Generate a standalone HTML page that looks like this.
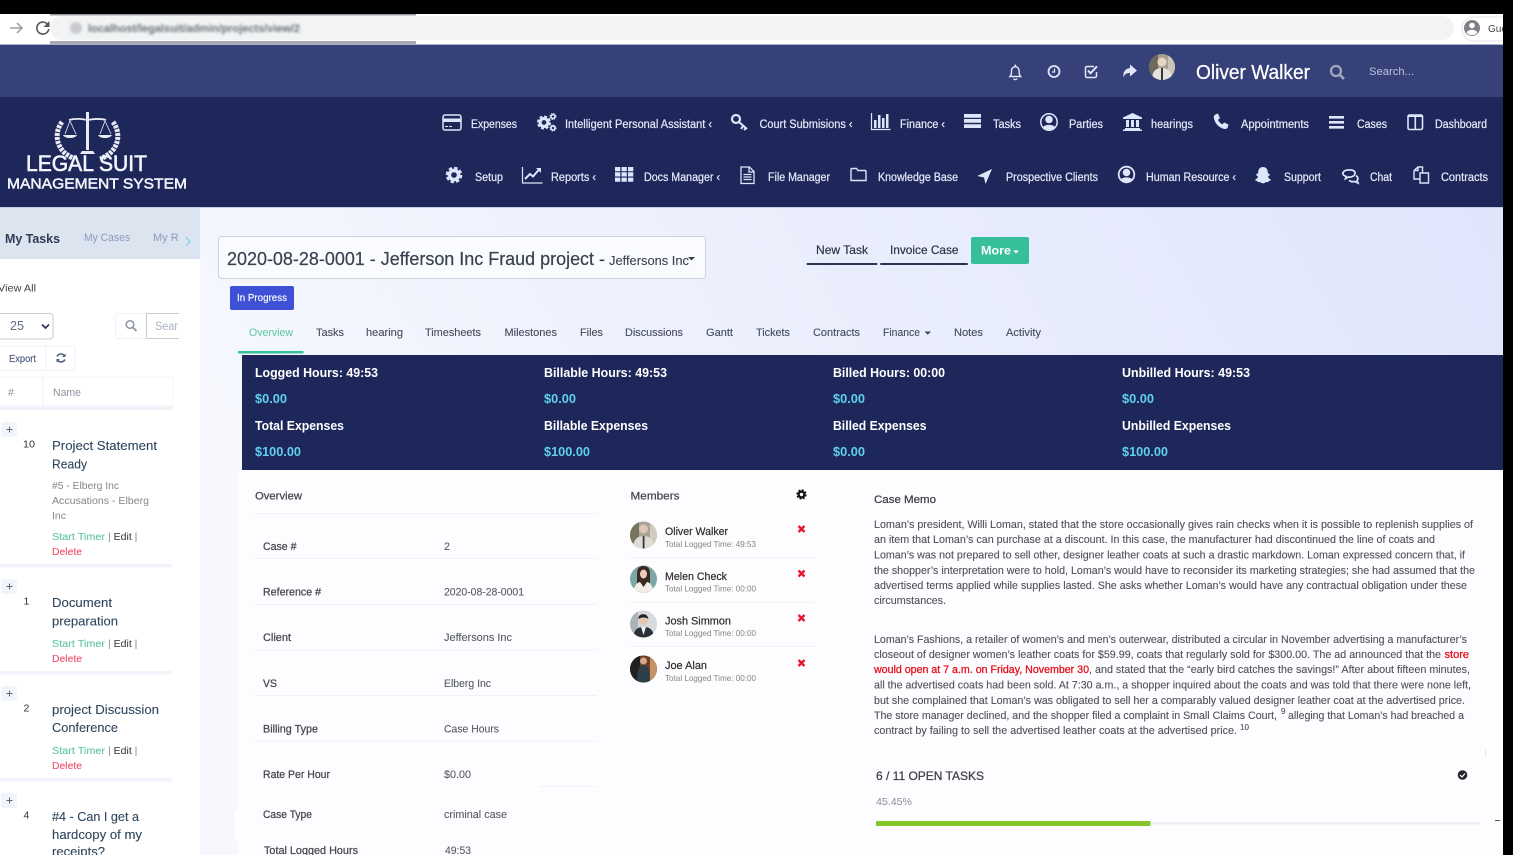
<!DOCTYPE html>
<html lang="en"><head><meta charset="utf-8"><title>Legal Suit Management System</title>
<style>
html,body{margin:0;padding:0;background:#000;width:1513px;height:855px;overflow:hidden}
svg{display:block;filter:blur(.3px)}
text{font-family:"Liberation Sans",sans-serif;white-space:pre}
.n{font-size:11.5px;fill:#e3e8f8;stroke:#e3e8f8;stroke-width:.22px}
.t{font-size:11px;fill:#454c5e;stroke:#454c5e;stroke-width:.12px}
.s{font-size:13px;font-weight:bold;fill:#fff}
.d{font-size:13px;font-weight:bold;fill:#5fd0ef}
.l{font-size:11px;fill:#44484f;stroke:#44484f;stroke-width:.25px}
.v{font-size:11px;fill:#555a64;stroke:#555a64;stroke-width:.1px}
.m{font-size:11px;fill:#4f5359;stroke:#4f5359;stroke-width:.12px}
.r{font-size:11px;fill:#e8111c;stroke:#e8111c;stroke-width:.3px}
.nm{font-size:11px;fill:#2e2e2e;stroke:#2e2e2e;stroke-width:.2px}
.sb{font-size:8.5px;fill:#858585}
.ti{font-size:13px;fill:#2f465c;stroke:#2f465c;stroke-width:.1px}
.g{font-size:10.5px;fill:#868686}
.st{font-size:10.5px;fill:#5fc4a1;stroke:#5fc4a1;stroke-width:.1px}
.ed{font-size:10.5px;fill:#333}
.de{font-size:10.5px;fill:#ee4f6c;stroke:#ee4f6c;stroke-width:.1px}
.ic{fill:#dde5fb}
.ol{fill:none;stroke:#dde5fb}
</style></head><body>
<svg xmlns="http://www.w3.org/2000/svg" width="1513" height="855" viewBox="0 0 1513 855">
<defs>
<linearGradient id="bg" x1="0" x2="1" y1="0.3" y2="0"><stop offset="0" stop-color="#f6f8fe"/><stop offset="1" stop-color="#dfe5fb"/></linearGradient>
<filter id="bl" x="-10%" y="-50%" width="120%" height="200%"><feGaussianBlur stdDeviation="1.2"/></filter>
<clipPath id="ca1"><circle cx="643.5" cy="535" r="13.5"/></clipPath>
<clipPath id="ca2"><circle cx="643.5" cy="579" r="13.5"/></clipPath>
<clipPath id="ca3"><circle cx="643.5" cy="624" r="13.5"/></clipPath>
<clipPath id="ca4"><circle cx="643.5" cy="669" r="13.5"/></clipPath>
<clipPath id="ca0"><circle cx="1162" cy="67" r="13"/></clipPath>
<clipPath id="side"><rect x="0" y="207" width="179" height="200"/></clipPath>
<g id="gear"><circle r="4.6" fill="none" stroke="currentColor" stroke-width="3.6"/><circle r="7" fill="none" stroke="currentColor" stroke-width="2.6" stroke-dasharray="3.3 2.2"/></g>
</defs>

<!-- browser chrome -->
<rect width="1513" height="855" fill="#000"/>
<rect x="0" y="14" width="1503" height="30" fill="#fff"/>
<rect x="50" y="16" width="1404" height="24" rx="12" fill="#f1f3f4"/>
<rect x="50" y="14" width="366" height="1.5" fill="#9a9aa5"/>
<rect x="50" y="41" width="366" height="4" fill="#a9acb8"/>
<path d="M10 28h12M17 23l5 5-5 5" fill="none" stroke="#9a9da3" stroke-width="1.5"/>
<path d="M48 25a6 6 0 1 0 .8 4" fill="none" stroke="#55585d" stroke-width="1.6"/><path d="M49.500 21v6h-6z" fill="#55585d"/>
<g filter="url(#bl)"><circle cx="76" cy="28" r="6" fill="#c8cacd"/><text x="88" y="32" font-size="11" font-weight="bold" fill="#6a6f78" textLength="212" lengthAdjust="spacingAndGlyphs">localhost/legalsuit/admin/projects/view/2</text></g>
<rect x="1462" y="17" width="50" height="24" rx="12" fill="#fff" stroke="#e4e5e8"/>
<circle cx="1472" cy="28" r="8" fill="#7f8388"/><circle cx="1472" cy="25.500" r="2.800" fill="#fff"/><path d="M1466.500 32.500c2-3.500 9-3.500 11 0a7 7 0 0 1-11 0z" fill="#fff"/>
<text x="1488" y="32" font-size="10" fill="#444">Gue</text>

<!-- header -->
<rect x="0" y="44" width="1503" height="53" fill="#364179"/>
<rect x="0" y="44" width="1503" height="1" fill="#a9b0c8"/>
<rect x="0" y="97" width="1503" height="110" fill="#1e2759"/>

<!-- top icons -->
<path d="M1010 76.500c1.500-1.500 1.500-3 1.500-6a3.800 3.800 0 0 1 7.600 0c0 3 .1 4.500 1.500 6z" fill="none" stroke="#e3e8f8" stroke-width="1.400"/><path d="M1013.500 78.500a2 2 0 0 0 3.600 0" fill="none" stroke="#e3e8f8" stroke-width="1.200"/><circle cx="1015.300" cy="65.500" r="1" fill="#e3e8f8"/>
<circle cx="1054" cy="71.500" r="5.500" fill="none" stroke="#e3e8f8" stroke-width="1.800"/><path d="M1054.500 68.500v3.500h-2.500" fill="none" stroke="#e3e8f8" stroke-width="1.200"/>
<path d="M1096.500 72v4a1.500 1.500 0 0 1-1.500 1.500h-8a1.500 1.500 0 0 1-1.500-1.500v-8a1.500 1.500 0 0 1 1.500-1.500h7" fill="none" stroke="#e3e8f8" stroke-width="1.500"/><path d="M1088 70.500l2.500 2.800 6.500-7" fill="none" stroke="#e3e8f8" stroke-width="2"/>
<path d="M1130 64.500l7 6-7 6v-3.500c-3.500 0-5.500 1-6.500 4.500-.8-5 1.500-9 6.500-9.500z" fill="#e3e8f8"/>
<g clip-path="url(#ca0)"><rect x="1149" y="54" width="26" height="26" fill="#a89f8e"/><rect x="1149" y="54" width="9" height="26" fill="#6d6a5e"/><rect x="1168" y="54" width="7" height="26" fill="#c9c4b6"/><circle cx="1162" cy="62" r="4.500" fill="#e5d5c5"/><path d="M1152 80c0-9 4-12 10-12s10 3 10 12z" fill="#e4e2dc"/><rect x="1161" y="68" width="2" height="12" fill="#33363d"/></g>
<text x="1196" y="79" font-size="20" fill="#fff" stroke="#fff" stroke-width=".25" textLength="114" lengthAdjust="spacingAndGlyphs">Oliver Walker</text>
<circle cx="1336" cy="71" r="5" fill="none" stroke="#a4a9bd" stroke-width="2.200"/><path d="M1339.500 74.500l4.500 4.500" stroke="#a4a9bd" stroke-width="2.600"/>
<text x="1369" y="75" font-size="11" fill="#bcc3dc" textLength="45" lengthAdjust="spacingAndGlyphs">Search...</text>

<!-- logo -->
<g fill="none" stroke="#e8ebf5">
<path d="M87.500 112v38" stroke-width="3"/><path d="M82 151h11l2 3h-15z" fill="#e8ebf5" stroke="none"/>
<path d="M69 120c7-2 13-1 18.500 0 5.500-1 12-2 18.500 0" stroke-width="1.800"/>
<path d="M70 121l-5 13M70 121l6 13M105 121l-5 13M105 121l6 13" stroke-width=".8"/>
<path d="M63 135h14c-2 4-12 4-14 0zM98 135h14c-2 4-12 4-14 0z" fill="#e8ebf5" stroke="none"/>
<path d="M62 122c-7 9-7 23 4 32 3 2 6 4 9 5" stroke-width="5" stroke-dasharray="3 1"/>
<path d="M113 122c7 9 7 23-4 32-3 2-6 4-9 5" stroke-width="5" stroke-dasharray="3 1"/>
</g>
<text x="26" y="171" font-size="22" fill="#f2f4fb" stroke="#f2f4fb" stroke-width=".6" textLength="121" lengthAdjust="spacingAndGlyphs">LEGAL SUIT</text>
<text x="7" y="188.500" font-size="15" fill="#f2f4fb" stroke="#f2f4fb" stroke-width=".5" textLength="180" lengthAdjust="spacingAndGlyphs">MANAGEMENT SYSTEM</text>

<!-- nav row 1 -->
<g class="n">
<text class="n" x="471" y="128" textLength="46" lengthAdjust="spacingAndGlyphs">Expenses</text>
<text class="n" x="565" y="128" textLength="147" lengthAdjust="spacingAndGlyphs">Intelligent Personal Assistant ‹</text>
<text class="n" x="759.500" y="128" textLength="93" lengthAdjust="spacingAndGlyphs">Court Submisions ‹</text>
<text class="n" x="900" y="128" textLength="45" lengthAdjust="spacingAndGlyphs">Finance ‹</text>
<text class="n" x="993" y="128" textLength="28" lengthAdjust="spacingAndGlyphs">Tasks</text>
<text class="n" x="1069" y="128" textLength="34" lengthAdjust="spacingAndGlyphs">Parties</text>
<text class="n" x="1151" y="128" textLength="42" lengthAdjust="spacingAndGlyphs">hearings</text>
<text class="n" x="1241" y="128" textLength="68" lengthAdjust="spacingAndGlyphs">Appointments</text>
<text class="n" x="1357" y="128" textLength="30" lengthAdjust="spacingAndGlyphs">Cases</text>
<text class="n" x="1435" y="128" textLength="52" lengthAdjust="spacingAndGlyphs">Dashboard</text>
<text class="n" x="475" y="181" textLength="28" lengthAdjust="spacingAndGlyphs">Setup</text>
<text class="n" x="551" y="181" textLength="45" lengthAdjust="spacingAndGlyphs">Reports ‹</text>
<text class="n" x="644" y="181" textLength="76" lengthAdjust="spacingAndGlyphs">Docs Manager ‹</text>
<text class="n" x="768" y="181" textLength="62" lengthAdjust="spacingAndGlyphs">File Manager</text>
<text class="n" x="878" y="181" textLength="80" lengthAdjust="spacingAndGlyphs">Knowledge Base</text>
<text class="n" x="1006" y="181" textLength="92" lengthAdjust="spacingAndGlyphs">Prospective Clients</text>
<text class="n" x="1146" y="181" textLength="90" lengthAdjust="spacingAndGlyphs">Human Resource ‹</text>
<text class="n" x="1284" y="181" textLength="37" lengthAdjust="spacingAndGlyphs">Support</text>
<text class="n" x="1370" y="181" textLength="22" lengthAdjust="spacingAndGlyphs">Chat</text>
<text class="n" x="1441" y="181" textLength="47" lengthAdjust="spacingAndGlyphs">Contracts</text>
</g>

<!-- nav icons row 1 -->
<rect class="ol" x="443" y="115" width="18" height="15" rx="2" stroke-width="1.500"/><rect class="ic" x="443" y="118.500" width="18" height="3.500"/><rect class="ic" x="445" y="126" width="3" height="1"/><rect class="ic" x="449" y="126" width="3" height="1"/>
<g style="color:#dde5fb"><use href="#gear" transform="translate(544 122.500) scale(.85)"/><use href="#gear" transform="translate(553 116.500) scale(.42)"/><use href="#gear" transform="translate(553 128) scale(.42)"/></g>
<circle class="ol" cx="736" cy="119" r="4" stroke-width="2.200"/><path class="ol" d="M739 122l8 7M743 126l-2 3M746 128l-2 2" stroke-width="2"/>
<path class="ol" d="M871.500 113v16.500h19" stroke-width="1.200"/><path class="ic" d="M874 120h2.500v8H874zM878 115h2.500v13H878zM882 118h2.500v10H882zM886 114h2.500v14H886z"/>
<path class="ic" d="M964 114h17v3.800h-17zM964 119h17v3.800h-17zM964 124.200h17v3.800h-17z"/>
<circle class="ol" cx="1049" cy="122" r="8.200" stroke-width="1.500"/><circle class="ic" cx="1049" cy="119.500" r="3.800"/><path class="ic" d="M1043 127.500c1-3.500 11-3.500 12 0-3 3-9 3-12 0z"/>
<path class="ic" d="M1132.500 113l9.500 4.500v1.500h-19v-1.500zM1125 128h15v1.500h2v1.500h-19v-1.500h2zM1126 120h3v7h-3zM1131 120h3v7h-3zM1136 120h3v7h-3z"/>
<path class="ic" d="M1215.500 114.200l2.500-.7 2 4.700-2 1.500c.8 2 2.500 3.800 4.500 4.700l1.600-2 4.400 2.200-.8 2.900c-.5 1.200-2 1.700-3.500 1.400-5.500-1.200-9.500-5.500-10.500-11.500-.2-1.300.7-2.500 1.800-2.700z"/>
<path class="ic" d="M1329 116h15v2.600h-15zM1329 121h15v2.600h-15zM1329 126h15v2.600h-15z"/>
<rect class="ol" x="1408" y="115" width="14.500" height="14.500" rx="1.500" stroke-width="1.600"/><path class="ic" d="M1414.500 115h1.600v14.500h-1.600zM1408 115h14.500v2h-14.500z"/>

<!-- nav icons row 2 -->
<g style="color:#dde5fb"><use href="#gear" transform="translate(454 175)"/></g>
<path class="ol" d="M522.500 167v16h20" stroke-width="1.200"/><path class="ol" d="M525 179l5-5 3 2.500 6-7" stroke-width="2"/><path class="ic" d="M536 168h5v5z"/>
<path class="ic" d="M615 167h5.300v4.200H615zM621.500 167h5.300v4.200h-5.300zM628 167h5.300v4.200H628zM615 172.300h5.300v4.200H615zM621.500 172.300h5.300v4.200h-5.300zM628 172.300h5.300v4.200H628zM615 177.600h5.300v4.200H615zM621.500 177.600h5.300v4.200h-5.300zM628 177.600h5.300v4.200H628z"/>
<path class="ol" d="M741 167h8.500l4.500 4.500V183.500h-13zM749 167v5h5M743.500 174.500h8M743.500 177h8M743.500 179.500h8" stroke-width="1.300"/>
<path class="ol" d="M851 180.500v-11a1 1 0 0 1 1-1h4.500l1.500 2h7a1 1 0 0 1 1 1v9z" stroke-width="1.400"/>
<path class="ic" d="M992 169l-6.500 15-1.500-6.500-6.800-1.500z"/>
<circle class="ol" cx="1126.500" cy="174.500" r="7.800" stroke-width="1.800"/><circle class="ic" cx="1126.500" cy="172.500" r="3.800"/><path class="ic" d="M1120.500 180c1.500-3.500 10.500-3.500 12 0-3 3-9 3-12 0z"/>
<path class="ic" d="M1263 167c3.500 0 4.800 2.700 4.800 5.500 0 1.500 2 1 2 2.200 0 1-1.800 1.300-1.800 2 .5 1.500 2.200 2.700 3 3 0 1-2 1-2.500 1.700-.7 1.300-1.500.3-3 1-1.200.7-2.300 1-2.500 1s-1.300-.3-2.500-1c-1.500-.7-2.300.3-3-1-.5-.7-2.500-.7-2.500-1.700.8-.3 2.500-1.500 3-3 0-.7-1.800-1-1.800-2 0-1.200 2-.7 2-2.200 0-2.800 1.300-5.500 4.800-5.500z"/>
<path class="ol" d="M1343 172.500c2-3.500 11-3.500 12 0 .7 3-3 5-6.500 4.500l-3 1.700.7-2.300c-2.300-.7-4-2-3.200-3.900z" stroke-width="1.700"/><path class="ol" d="M1356 175.500c2 1.500 2.500 3.500 1 5l1 2.500-3.500-1.500c-2 .5-4 0-5.500-1" stroke-width="1.700"/>
<path class="ol" d="M1414 170.500l4-3.500h4.500v5.500M1414 170.500v8.500h6M1414 170.500h4v-3.500M1420 173h8.500v10h-8.500z" stroke-width="1.400"/>

<!-- content background -->
<rect x="0" y="207" width="1503" height="1.500" fill="#c4cde8"/>
<rect x="200" y="208" width="1303" height="647" fill="url(#bg)"/>
<rect x="0" y="208" width="200" height="51" fill="#dce5ef"/>
<rect x="0" y="259" width="200" height="596" fill="#fff"/>

<!-- sidebar -->
<text x="5" y="243" font-size="13" font-weight="bold" fill="#2f3a57" textLength="55" lengthAdjust="spacingAndGlyphs">My Tasks</text>
<text x="84" y="241" font-size="11" fill="#8a9abd" textLength="46" lengthAdjust="spacingAndGlyphs">My Cases</text>
<g clip-path="url(#side)"><text x="153" y="241" font-size="11" fill="#8a9abd">My Reminders</text></g>
<path d="M186 237l4 4.500-4 4.500" fill="none" stroke="#8ed6ef" stroke-width="1.500"/>
<text x="-2" y="291.500" font-size="10.500" fill="#444" textLength="38" lengthAdjust="spacingAndGlyphs">View All</text>
<rect x="-6" y="313.500" width="59" height="25.500" rx="3" fill="#fff" stroke="#c6ccd6"/>
<text x="10" y="330" font-size="12.500" fill="#5d6b80" textLength="14" lengthAdjust="spacingAndGlyphs">25</text>
<path d="M42 324.500l3.500 3.500 3.500-3.500" fill="none" stroke="#2f3a57" stroke-width="1.800"/>
<rect x="115.500" y="313.500" width="31" height="25" rx="2" fill="#fff" stroke="#eef0f6"/>
<circle cx="130" cy="324.500" r="3.800" fill="none" stroke="#8a95a5" stroke-width="1.500"/><path d="M133 327.500l3.500 3.500" stroke="#8a95a5" stroke-width="1.800"/>
<path d="M146.500 313.500h32.500M146.500 338.500h32.500M146.500 313.500v25" fill="none" stroke="#c6ccd6"/>
<text x="155" y="330" font-size="11.500" fill="#aab2c0" textLength="23" lengthAdjust="spacingAndGlyphs">Sear</text>
<rect x="-4" y="346" width="50" height="24.500" fill="#fff" stroke="#f0f2f8"/>
<rect x="46" y="346" width="29" height="24.500" rx="1" fill="#fff" stroke="#f0f2f8"/>
<text x="9" y="362" font-size="10" fill="#4e5c80" stroke="#4e5c80" stroke-width=".15" textLength="27" lengthAdjust="spacingAndGlyphs">Export</text>
<path d="M57 356.500a4.500 4.500 0 0 1 8 0M65 359.500a4.500 4.500 0 0 1-8 0" fill="none" stroke="#4e5c80" stroke-width="1.500"/><path d="M65.500 353.500v3.500h-3.500zM56.500 362.500v-3.500h3.500z" fill="#4e5c80"/>
<rect x="-2" y="377" width="175" height="29" fill="#fff" stroke="#f2f4fa"/>
<path d="M43 377v29" stroke="#f0f2f8"/>
<rect x="0" y="406" width="173" height="4" fill="#f1f3fb"/>
<text x="8" y="396" font-size="11" fill="#8d939f" textLength="6" lengthAdjust="spacingAndGlyphs">#</text>
<text x="53" y="396" font-size="11" fill="#8d939f" textLength="28" lengthAdjust="spacingAndGlyphs">Name</text>

<!-- rows -->
<g fill="#f2f4fb">
<rect x="1" y="422" width="16" height="15" rx="3"/><rect x="1" y="579" width="16" height="15" rx="3"/><rect x="1" y="686" width="16" height="15" rx="3"/><rect x="1" y="793" width="16" height="15" rx="3"/>
<rect x="0" y="564" width="172" height="3.500"/><rect x="0" y="671" width="172" height="3.500"/><rect x="0" y="778" width="172" height="3.500"/>
</g>
<g fill="#5a6680"><path d="M6.500 429h6v1h-6zM9 426.500h1v6H9zM6.500 586h6v1h-6zM9 583.500h1v6H9zM6.500 693h6v1h-6zM9 690.500h1v6H9zM6.500 800h6v1h-6zM9 797.500h1v6H9z"/></g>
<g font-size="10.500" fill="#333"><text x="23" y="447.500" textLength="12" lengthAdjust="spacingAndGlyphs">10</text><text x="23.500" y="604.500">1</text><text x="23.500" y="711.500">2</text><text x="23.500" y="818.500">4</text></g>
<text class="ti" x="52" y="450" textLength="105" lengthAdjust="spacingAndGlyphs">Project Statement</text>
<text class="ti" x="52" y="468.500" textLength="35" lengthAdjust="spacingAndGlyphs">Ready</text>
<text class="g" x="52" y="489" textLength="67" lengthAdjust="spacingAndGlyphs">#5 - Elberg Inc</text>
<text class="g" x="52" y="504" textLength="97" lengthAdjust="spacingAndGlyphs">Accusations - Elberg</text>
<text class="g" x="52" y="519" textLength="14" lengthAdjust="spacingAndGlyphs">Inc</text>
<text class="ti" x="52" y="607" textLength="60" lengthAdjust="spacingAndGlyphs">Document</text>
<text class="ti" x="52" y="625.500" textLength="66" lengthAdjust="spacingAndGlyphs">preparation</text>
<text class="ti" x="52" y="714" textLength="107" lengthAdjust="spacingAndGlyphs">project Discussion</text>
<text class="ti" x="52" y="732" textLength="66" lengthAdjust="spacingAndGlyphs">Conference</text>
<text class="ti" x="52" y="821" textLength="87" lengthAdjust="spacingAndGlyphs">#4 - Can I get a</text>
<text class="ti" x="52" y="839" textLength="90" lengthAdjust="spacingAndGlyphs">hardcopy of my</text>
<text class="ti" x="52" y="856" textLength="53" lengthAdjust="spacingAndGlyphs">receipts?</text>

<text class="st" x="52" y="540" textLength="53" lengthAdjust="spacingAndGlyphs">Start Timer</text><text class="ed" x="108" y="540"><tspan fill="#888">|</tspan> Edit <tspan fill="#888">|</tspan></text><text class="de" x="52" y="555" textLength="30" lengthAdjust="spacingAndGlyphs">Delete</text>
<text class="st" x="52" y="647" textLength="53" lengthAdjust="spacingAndGlyphs">Start Timer</text><text class="ed" x="108" y="647"><tspan fill="#888">|</tspan> Edit <tspan fill="#888">|</tspan></text><text class="de" x="52" y="662" textLength="30" lengthAdjust="spacingAndGlyphs">Delete</text>
<text class="st" x="52" y="754" textLength="53" lengthAdjust="spacingAndGlyphs">Start Timer</text><text class="ed" x="108" y="754"><tspan fill="#888">|</tspan> Edit <tspan fill="#888">|</tspan></text><text class="de" x="52" y="769" textLength="30" lengthAdjust="spacingAndGlyphs">Delete</text>

<!-- title block -->
<rect x="218.500" y="236.500" width="487" height="42" rx="3" fill="#fafbff" stroke="#cfd3de"/>
<text x="227" y="265" font-size="18.500" fill="#38424f" stroke="#38424f" stroke-width=".2" textLength="378" lengthAdjust="spacingAndGlyphs">2020-08-28-0001 - Jefferson Inc Fraud project -</text>
<text x="609" y="265" font-size="12.500" fill="#38424f" stroke="#38424f" stroke-width=".1" textLength="80" lengthAdjust="spacingAndGlyphs">Jeffersons Inc</text>
<path d="M688 257h7l-3.500 3.500z" fill="#38424f"/>
<text x="816" y="254" font-size="12" fill="#2c3446" stroke="#2c3446" stroke-width=".2" textLength="52" lengthAdjust="spacingAndGlyphs">New Task</text>
<text x="890" y="254" font-size="12" fill="#2c3446" stroke="#2c3446" stroke-width=".2" textLength="68.500" lengthAdjust="spacingAndGlyphs">Invoice Case</text>
<rect x="806.500" y="263" width="71" height="2" rx="1" fill="#2b3350"/>
<rect x="880" y="263" width="88" height="2" rx="1" fill="#2b3350"/>
<rect x="971" y="237" width="58" height="27" rx="2" fill="#37bf9b"/>
<text x="981" y="254.500" font-size="12" font-weight="bold" fill="#fff" textLength="30" lengthAdjust="spacingAndGlyphs">More</text>
<path d="M1013 250.500h6l-3 3z" fill="#fff"/>
<rect x="230" y="286" width="64" height="24" rx="2" fill="#3d50d6"/>
<text x="237" y="301" font-size="10.500" fill="#fff" stroke="#fff" stroke-width=".15" textLength="50" lengthAdjust="spacingAndGlyphs">In Progress</text>

<!-- tabs -->
<text class="t" style="fill:#6cc9aa;stroke:#6cc9aa" x="249" y="336" textLength="44" lengthAdjust="spacingAndGlyphs">Overview</text>
<text class="t" x="316" y="336" textLength="28" lengthAdjust="spacingAndGlyphs">Tasks</text>
<text class="t" x="366" y="336" textLength="37" lengthAdjust="spacingAndGlyphs">hearing</text>
<text class="t" x="425" y="336" textLength="56" lengthAdjust="spacingAndGlyphs">Timesheets</text>
<text class="t" x="504.500" y="336" textLength="52.500" lengthAdjust="spacingAndGlyphs">Milestones</text>
<text class="t" x="580" y="336" textLength="23" lengthAdjust="spacingAndGlyphs">Files</text>
<text class="t" x="625" y="336" textLength="58" lengthAdjust="spacingAndGlyphs">Discussions</text>
<text class="t" x="706" y="336" textLength="27" lengthAdjust="spacingAndGlyphs">Gantt</text>
<text class="t" x="756" y="336" textLength="34" lengthAdjust="spacingAndGlyphs">Tickets</text>
<text class="t" x="813" y="336" textLength="47" lengthAdjust="spacingAndGlyphs">Contracts</text>
<text class="t" x="883" y="336" textLength="37" lengthAdjust="spacingAndGlyphs">Finance</text>
<path d="M924.500 331.500h6.500l-3.200 3.200z" fill="#3e4555"/>
<text class="t" x="954" y="336" textLength="29" lengthAdjust="spacingAndGlyphs">Notes</text>
<text class="t" x="1006" y="336" textLength="35" lengthAdjust="spacingAndGlyphs">Activity</text>
<rect x="238" y="351" width="65.500" height="2.500" fill="#37bf9b"/>

<!-- stats -->
<rect x="242" y="355" width="1261" height="115" fill="#1e2759"/>
<text class="s" x="255" y="377" textLength="123" lengthAdjust="spacingAndGlyphs">Logged Hours: 49:53</text>
<text class="s" x="544" y="377" textLength="123" lengthAdjust="spacingAndGlyphs">Billable Hours: 49:53</text>
<text class="s" x="833" y="377" textLength="112" lengthAdjust="spacingAndGlyphs">Billed Hours: 00:00</text>
<text class="s" x="1122" y="377" textLength="128" lengthAdjust="spacingAndGlyphs">Unbilled Hours: 49:53</text>
<text class="d" x="255" y="403" textLength="32" lengthAdjust="spacingAndGlyphs">$0.00</text>
<text class="d" x="544" y="403" textLength="32" lengthAdjust="spacingAndGlyphs">$0.00</text>
<text class="d" x="833" y="403" textLength="32" lengthAdjust="spacingAndGlyphs">$0.00</text>
<text class="d" x="1122" y="403" textLength="32" lengthAdjust="spacingAndGlyphs">$0.00</text>
<text class="s" x="255" y="430" textLength="89" lengthAdjust="spacingAndGlyphs">Total Expenses</text>
<text class="s" x="544" y="430" textLength="104" lengthAdjust="spacingAndGlyphs">Billable Expenses</text>
<text class="s" x="833" y="430" textLength="93.500" lengthAdjust="spacingAndGlyphs">Billed Expenses</text>
<text class="s" x="1122" y="430" textLength="109" lengthAdjust="spacingAndGlyphs">Unbilled Expenses</text>
<text class="d" x="255" y="456" textLength="46" lengthAdjust="spacingAndGlyphs">$100.00</text>
<text class="d" x="544" y="456" textLength="46" lengthAdjust="spacingAndGlyphs">$100.00</text>
<text class="d" x="833" y="456" textLength="32" lengthAdjust="spacingAndGlyphs">$0.00</text>
<text class="d" x="1122" y="456" textLength="46" lengthAdjust="spacingAndGlyphs">$100.00</text>

<!-- panel -->
<rect x="238" y="470" width="1265" height="385" fill="#fdfdff"/>
<rect x="235" y="810" width="3" height="30" fill="#fff"/>

<!-- overview -->
<text class="l" x="255" y="499.500" textLength="47" lengthAdjust="spacingAndGlyphs">Overview</text>
<g stroke="#f0f1f5"><path d="M255 513.500h342M255 558.500h342M255 604.500h342M255 650h342M255 695.500h342M255 741h342M540 786.500h57"/></g>
<text class="l" x="263" y="550" textLength="33.500" lengthAdjust="spacingAndGlyphs">Case #</text><text class="v" x="444" y="550" textLength="6" lengthAdjust="spacingAndGlyphs">2</text>
<text class="l" x="263" y="595.500" textLength="58" lengthAdjust="spacingAndGlyphs">Reference #</text><text class="v" x="444" y="595.500" textLength="80" lengthAdjust="spacingAndGlyphs">2020-08-28-0001</text>
<text class="l" x="263" y="641" textLength="28" lengthAdjust="spacingAndGlyphs">Client</text><text class="v" x="444" y="641" textLength="68" lengthAdjust="spacingAndGlyphs">Jeffersons Inc</text>
<text class="l" x="263" y="687" textLength="14" lengthAdjust="spacingAndGlyphs">VS</text><text class="v" x="444" y="687" textLength="47" lengthAdjust="spacingAndGlyphs">Elberg Inc</text>
<text class="l" x="263" y="732.500" textLength="55" lengthAdjust="spacingAndGlyphs">Billing Type</text><text class="v" x="444" y="732.500" textLength="55" lengthAdjust="spacingAndGlyphs">Case Hours</text>
<text class="l" x="263" y="778" textLength="67" lengthAdjust="spacingAndGlyphs">Rate Per Hour</text><text class="v" x="444" y="778" textLength="27" lengthAdjust="spacingAndGlyphs">$0.00</text>
<text class="l" x="263" y="818" textLength="49" lengthAdjust="spacingAndGlyphs">Case Type</text><text class="v" x="444" y="818" textLength="63" lengthAdjust="spacingAndGlyphs">criminal case</text>
<text class="l" x="264" y="854" textLength="94" lengthAdjust="spacingAndGlyphs">Total Logged Hours</text><text class="v" x="445" y="854" textLength="26" lengthAdjust="spacingAndGlyphs">49:53</text>

<!-- members -->
<text class="l" x="630.500" y="499.500" textLength="49" lengthAdjust="spacingAndGlyphs">Members</text>
<g style="color:#111"><use href="#gear" transform="translate(801.500 494.500) scale(.62)"/></g>
<g stroke="#f1f2f6"><path d="M631 557.500h184M631 602h184M631 646.500h184"/></g>
<g clip-path="url(#ca1)"><rect x="630" y="521" width="27" height="28" fill="#a9a497"/><rect x="630" y="521" width="9" height="28" fill="#77745f"/><rect x="650" y="521" width="7" height="28" fill="#cfccc0"/><circle cx="643.500" cy="529" r="4.500" fill="#dcc6b4"/><path d="M633 549c0-10 5-13 10.500-13s10.500 3 10.500 13z" fill="#dedcd4"/><rect x="642.700" y="536" width="1.800" height="13" fill="#33363d"/></g>
<g clip-path="url(#ca2)"><rect x="630" y="565" width="27" height="28" fill="#7da7a4"/><path d="M637 593v-20c0-5 3-7 6.500-7s6.500 2 6.500 7v20z" fill="#3a2a24"/><ellipse cx="643.500" cy="574" rx="3.500" ry="4.500" fill="#eccdb9"/><path d="M633 593c1-8 5-11 7-11l3.500 5 3.500-5c2 0 6 3 7 11z" fill="#f1eee8"/></g>
<g clip-path="url(#ca3)"><rect x="630" y="610" width="27" height="28" fill="#d6dadc"/><rect x="630" y="610" width="8" height="28" fill="#aab3b8"/><ellipse cx="643.500" cy="620" rx="4.500" ry="5.500" fill="#e6c8b2"/><path d="M638.500 619c-1-6 9-7 10 0-3-2-7-2-10 0z" fill="#22252a"/><path d="M633 638c1-9 5-11 10.500-11s10 2 10.500 11z" fill="#2a2f38"/><path d="M641 627h5l-2.500 8z" fill="#f2f2f2"/></g>
<g clip-path="url(#ca4)"><rect x="630" y="655" width="27" height="28" fill="#6d3f26"/><rect x="630" y="655" width="10" height="28" fill="#22201f"/><rect x="650" y="655" width="7" height="28" fill="#c49368"/><circle cx="643.500" cy="661" r="3.500" fill="#d2a98b"/><path d="M637 683c0-13 2-18 6.500-18s6.500 5 6.500 18z" fill="#2e3f4a"/></g>
<text class="nm" x="665" y="535" textLength="63" lengthAdjust="spacingAndGlyphs">Oliver Walker</text><text class="sb" x="665" y="547" textLength="91" lengthAdjust="spacingAndGlyphs">Total Logged Time: 49:53</text>
<text class="nm" x="665" y="580" textLength="62" lengthAdjust="spacingAndGlyphs">Melen Check</text><text class="sb" x="665" y="591.500" textLength="91" lengthAdjust="spacingAndGlyphs">Total Logged Time: 00:00</text>
<text class="nm" x="665" y="624.500" textLength="66" lengthAdjust="spacingAndGlyphs">Josh Simmon</text><text class="sb" x="665" y="636" textLength="91" lengthAdjust="spacingAndGlyphs">Total Logged Time: 00:00</text>
<text class="nm" x="665" y="669" textLength="42" lengthAdjust="spacingAndGlyphs">Joe Alan</text><text class="sb" x="665" y="681" textLength="91" lengthAdjust="spacingAndGlyphs">Total Logged Time: 00:00</text>
<g stroke="#e9162f" stroke-width="2.400" fill="none"><path d="M798.500 526l6 6M804.500 526l-6 6M798.500 570.500l6 6M804.500 570.500l-6 6M798.500 615l6 6M804.500 615l-6 6M798.500 660l6 6M804.500 660l-6 6"/></g>

<!-- memo -->
<text class="l" style="fill:#3c3f45;stroke:#3c3f45" x="874" y="503" textLength="62" lengthAdjust="spacingAndGlyphs">Case Memo</text>
<text class="m" x="874" y="528" textLength="599" lengthAdjust="spacingAndGlyphs">Loman’s president, Willi Loman, stated that the store occasionally gives rain checks when it is possible to replenish supplies of</text>
<text class="m" x="874" y="543" textLength="561" lengthAdjust="spacingAndGlyphs">an item that Loman’s can purchase at a discount. In this case, the manufacturer had discontinued the line of coats and</text>
<text class="m" x="874" y="558.500" textLength="591" lengthAdjust="spacingAndGlyphs">Loman’s was not prepared to sell other, designer leather coats at such a drastic markdown. Loman expressed concern that, if</text>
<text class="m" x="874" y="574" textLength="601" lengthAdjust="spacingAndGlyphs">the shopper’s interpretation were to hold, Loman’s would have to reconsider its marketing strategies; she had assumed that the</text>
<text class="m" x="874" y="589" textLength="593" lengthAdjust="spacingAndGlyphs">advertised terms applied while supplies lasted. She asks whether Loman’s would have any contractual obligation under these</text>
<text class="m" x="874" y="604" textLength="72" lengthAdjust="spacingAndGlyphs">circumstances.</text>
<text class="m" x="874" y="643" textLength="593" lengthAdjust="spacingAndGlyphs">Loman’s Fashions, a retailer of women’s and men’s outerwear, distributed a circular in November advertising a manufacturer’s</text>
<text class="m" x="874" y="658" textLength="567" lengthAdjust="spacingAndGlyphs">closeout of designer women’s leather coats for $59.99, coats that regularly sold for $300.00. The ad announced that the</text>
<text class="r" x="1444.500" y="658" textLength="24.500" lengthAdjust="spacingAndGlyphs">store</text>
<text class="r" x="874" y="673" textLength="215" lengthAdjust="spacingAndGlyphs">would open at 7 a.m. on Friday, November 30</text>
<text class="m" x="1089" y="673" textLength="381" lengthAdjust="spacingAndGlyphs">, and stated that the “early bird catches the savings!” After about fifteen minutes,</text>
<text class="m" x="874" y="688.500" textLength="597" lengthAdjust="spacingAndGlyphs">all the advertised coats had been sold. At 7:30 a.m., a shopper inquired about the coats and was told that there were none left,</text>
<text class="m" x="874" y="704" textLength="591" lengthAdjust="spacingAndGlyphs">but she complained that Loman’s was obligated to sell her a comparably valued designer leather coat at the advertised price.</text>
<text class="m" x="874" y="719" textLength="403" lengthAdjust="spacingAndGlyphs">The store manager declined, and the shopper filed a complaint in Small Claims Court,</text>
<text class="m" x="1281" y="714" style="font-size:8px">9</text>
<text class="m" x="1288" y="719" textLength="176" lengthAdjust="spacingAndGlyphs">alleging that Loman’s had breached a</text>
<text class="m" x="874" y="734" textLength="363" lengthAdjust="spacingAndGlyphs">contract by failing to sell the advertised leather coats at the advertised price.</text>
<text class="m" x="1240" y="730" style="font-size:8px" textLength="9" lengthAdjust="spacingAndGlyphs">10</text>

<!-- progress -->
<text x="876" y="780" font-size="12" fill="#3b3f47" stroke="#3b3f47" stroke-width=".25" textLength="108" lengthAdjust="spacingAndGlyphs">6 / 11 OPEN TASKS</text>
<circle cx="1462.500" cy="775" r="4.800" fill="#22252b"/><path d="M1460 775l2 2 3-3.500" fill="none" stroke="#fff" stroke-width="1.200"/>
<text x="876" y="805" font-size="10.500" fill="#8a8d93" textLength="36" lengthAdjust="spacingAndGlyphs">45.45%</text>
<rect x="876" y="822" width="604" height="2.500" fill="#eff0f3"/>
<rect x="876" y="821" width="274.500" height="5" rx="1" fill="#84c529"/>
<rect x="1485" y="750" width="1" height="6" fill="#e2e3e6"/>
<rect x="1495" y="820" width="5" height="1" fill="#555"/>

<!-- black strip on right edge -->
<rect x="1503" y="0" width="10" height="855" fill="#000"/>
</svg>
</body></html>
